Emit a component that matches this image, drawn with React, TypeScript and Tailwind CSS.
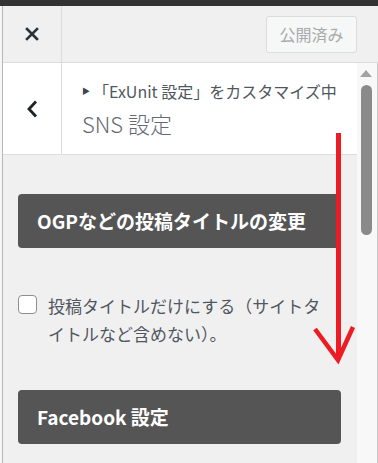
const jp = { fontFamily: '"Noto Sans CJK JP", "Open Sans", sans-serif' };

function CloseIcon() {
  return (
    <svg width="14" height="14" viewBox="0 0 14 14" className="text-[#2c3338]">
      <path d="M2 2 L12 12 M12 2 L2 12" stroke="currentColor" strokeWidth="2.6" strokeLinecap="square" />
    </svg>
  );
}

function BackIcon() {
  return (
    <svg width="12" height="18" viewBox="0 0 12 18" className="text-[#1d2327]">
      <path d="M10 1.5 L3 9 L10 16.5" fill="none" stroke="currentColor" strokeWidth="2.8" />
    </svg>
  );
}

function Scrollbar() {
  return (
    <div className="flex w-[21px] shrink-0 flex-col items-center border-r border-[#c8c8c8] bg-[#f8f8f8] pr-[2px] pt-[7px]">
      <svg width="12" height="7" viewBox="0 0 12 7">
        <path d="M0 7 L6 0 L12 7 Z" fill="#a3a3a3" />
      </svg>
      <div className="mt-[8px] h-[150px] w-[11px] rounded-full bg-[#8a8a8a]" />
    </div>
  );
}

function SectionButton({ label }: { label: string }) {
  return (
    <div className="flex h-[54px] items-center rounded-[4px] bg-[#555555] pl-[19px] text-[19px] font-bold text-white">
      {label}
    </div>
  );
}

export default function App() {
  return (
    <div className="relative flex h-[463px] w-[378px] flex-col overflow-hidden bg-white" style={jp}>
      <div className="h-[6px] shrink-0 bg-[#333333]" />
      <div className="flex flex-1">
        <div className="w-[3px] shrink-0 border-r border-[#b8b8b8] bg-[#f7f7f7]" />
        <div className="flex flex-1 flex-col">
          <div className="flex h-[57px] shrink-0 items-center border-b border-[#dcdcde] bg-[#f0f0f1]">
            <div className="flex h-full w-[59px] items-center justify-center border-r border-[#dcdcde]">
              <CloseIcon />
            </div>
            <div className="flex-1" />
            <div className="mr-[21px] flex h-[37px] w-[91px] items-center justify-center rounded-[3px] border border-[#dcdcde] bg-[#f6f7f7] text-[16px] text-[#a7aaad]">
              公開済み
            </div>
          </div>
          <div className="flex flex-1">
            <div className="flex w-[354px] flex-col">
              <div className="flex h-[92px] shrink-0 border-b border-[#dcdcde] bg-white">
                <div className="flex w-[59px] items-center justify-center border-r border-[#dcdcde]">
                  <BackIcon />
                </div>
                <div className="flex flex-col pl-[20px] pt-[16px]">
                  <div className="flex items-center text-[16px] leading-[24px] text-[#50575e]">
                    <span className="mr-[3px] text-[8px] text-[#3c434a]">▶</span>
                    「ExUnit 設定」をカスタマイズ中
                  </div>
                  <div className="mt-[6px] text-[22px] font-light leading-[28px] text-[#646970]">SNS 設定</div>
                </div>
              </div>
              <div className="flex flex-1 flex-col bg-[#f0f0f1] pl-[15px] pr-[16px] pt-[39px]">
                <SectionButton label="OGPなどの投稿タイトルの変更" />
                <div className="mt-[44px] flex items-start gap-[11px]">
                  <div className="mt-[3px] h-[19px] w-[19px] shrink-0 rounded-[4px] border border-[#8c8f94] bg-white" />
                  <div className="text-[17px] leading-[28px] text-[#50575e]">
                    投稿タイトルだけにする（サイトタ
                    <br />
                    イトルなど含めない）。
                  </div>
                </div>
                <div className="mt-[42px]">
                  <SectionButton label="Facebook 設定" />
                </div>
              </div>
            </div>
            <Scrollbar />
          </div>
        </div>
      </div>
      <svg className="pointer-events-none absolute left-0 top-0" width="378" height="463" viewBox="0 0 378 463">
        <path d="M338.5 133 L338.5 358" stroke="#ed1c24" strokeWidth="5" />
        <path d="M315 329 L338 360 L353 327" fill="none" stroke="#ed1c24" strokeWidth="4.5" strokeLinejoin="miter" />
      </svg>
    </div>
  );
}
